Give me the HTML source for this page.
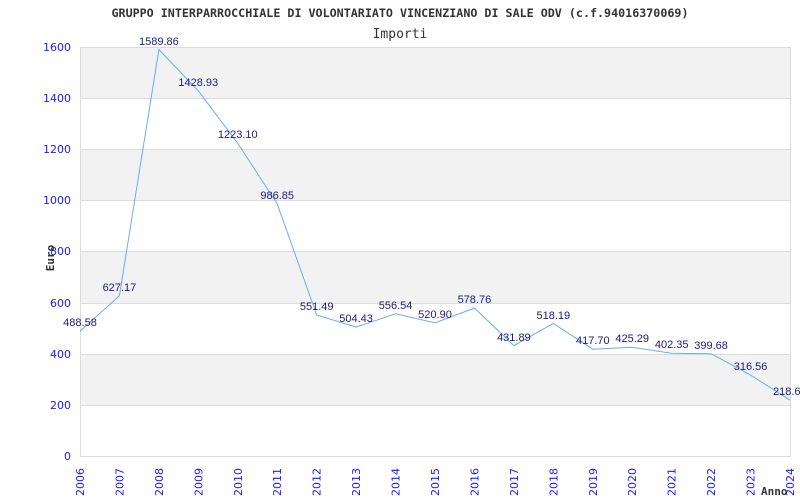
<!DOCTYPE html>
<html><head><meta charset="utf-8"><style>body{margin:0;background:#fff}svg{display:block}</style></head><body>
<svg width="800" height="500" xmlns="http://www.w3.org/2000/svg">
<text x="400" y="17" text-anchor="middle" font-family="DejaVu Sans Mono, monospace" font-weight="bold" font-size="11.7" fill="#333">GRUPPO INTERPARROCCHIALE DI VOLONTARIATO VINCENZIANO DI SALE ODV (c.f.94016370069)</text>
<text x="400" y="38" text-anchor="middle" font-family="DejaVu Sans Mono, monospace" font-size="13" fill="#333">Importi</text>
<g fill="#f2f2f2"><rect x="80" y="47" width="710" height="51"/><rect x="80" y="149" width="710" height="51"/><rect x="80" y="251" width="710" height="52"/><rect x="80" y="354" width="710" height="51"/></g>
<g stroke="#dcdcdc" stroke-width="1"><line x1="80" y1="47.5" x2="790" y2="47.5"/><line x1="80" y1="98.5" x2="790" y2="98.5"/><line x1="80" y1="149.5" x2="790" y2="149.5"/><line x1="80" y1="200.5" x2="790" y2="200.5"/><line x1="80" y1="251.5" x2="790" y2="251.5"/><line x1="80" y1="303.5" x2="790" y2="303.5"/><line x1="80" y1="354.5" x2="790" y2="354.5"/><line x1="80" y1="405.5" x2="790" y2="405.5"/><line x1="80" y1="456.5" x2="790" y2="456.5"/><line x1="80.5" y1="47" x2="80.5" y2="457"/><line x1="790.5" y1="47" x2="790.5" y2="457"/></g>
<g font-family="DejaVu Sans, sans-serif" font-size="11" fill="#1a1aff" text-anchor="end"><text x="71" y="51">1600</text><text x="71" y="102">1400</text><text x="71" y="153">1200</text><text x="71" y="204">1000</text><text x="71" y="255">800</text><text x="71" y="307">600</text><text x="71" y="358">400</text><text x="71" y="409">200</text><text x="71" y="460">0</text></g>
<text transform="translate(54,258) rotate(-90)" font-family="DejaVu Sans Mono, monospace" font-weight="bold" font-size="11" fill="#333" text-anchor="middle">Euro</text>
<g font-family="DejaVu Sans, sans-serif" font-size="11" fill="#1a1aff">
<text transform="translate(84,496) rotate(-90)">2006</text><text transform="translate(123.4,496) rotate(-90)">2007</text><text transform="translate(162.9,496) rotate(-90)">2008</text><text transform="translate(202.3,496) rotate(-90)">2009</text><text transform="translate(241.8,496) rotate(-90)">2010</text><text transform="translate(281.2,496) rotate(-90)">2011</text><text transform="translate(320.7,496) rotate(-90)">2012</text><text transform="translate(360.1,496) rotate(-90)">2013</text><text transform="translate(399.6,496) rotate(-90)">2014</text><text transform="translate(439,496) rotate(-90)">2015</text><text transform="translate(478.4,496) rotate(-90)">2016</text><text transform="translate(517.9,496) rotate(-90)">2017</text><text transform="translate(557.3,496) rotate(-90)">2018</text><text transform="translate(596.8,496) rotate(-90)">2019</text><text transform="translate(636.2,496) rotate(-90)">2020</text><text transform="translate(675.7,496) rotate(-90)">2021</text><text transform="translate(715.1,496) rotate(-90)">2022</text><text transform="translate(754.6,496) rotate(-90)">2023</text><text transform="translate(794,496) rotate(-90)">2024</text></g>
<text x="761" y="495" font-family="DejaVu Sans Mono, monospace" font-weight="bold" font-size="11" fill="#333">Anno</text>
<polyline fill="none" stroke="#6aaeee" stroke-width="1" points="80,331.1 119.4,295.7 158.9,49.6 198.3,90.8 237.8,143.4 277.2,203.8 316.7,315 356.1,327.1 395.6,313.8 435,322.9 474.4,308.1 513.9,345.6 553.3,323.5 592.8,349.2 632.2,347.3 671.7,353.2 711.1,353.8 750.6,375.1 790,400.1"/>
<g font-family="Liberation Sans, sans-serif" font-size="11" fill="#1a1a80" text-anchor="middle">
<text x="80" y="326">488.58</text><text x="119.4" y="291">627.17</text><text x="158.9" y="45">1589.86</text><text x="198.3" y="86">1428.93</text><text x="237.8" y="138">1223.10</text><text x="277.2" y="199">986.85</text><text x="316.7" y="310">551.49</text><text x="356.1" y="322">504.43</text><text x="395.6" y="309">556.54</text><text x="435" y="318">520.90</text><text x="474.4" y="303">578.76</text><text x="513.9" y="341">431.89</text><text x="553.3" y="319">518.19</text><text x="592.8" y="344">417.70</text><text x="632.2" y="342">425.29</text><text x="671.7" y="348">402.35</text><text x="711.1" y="349">399.68</text><text x="750.6" y="370">316.56</text><text x="773" y="395" text-anchor="start">218.6</text></g>
</svg>
</body></html>
